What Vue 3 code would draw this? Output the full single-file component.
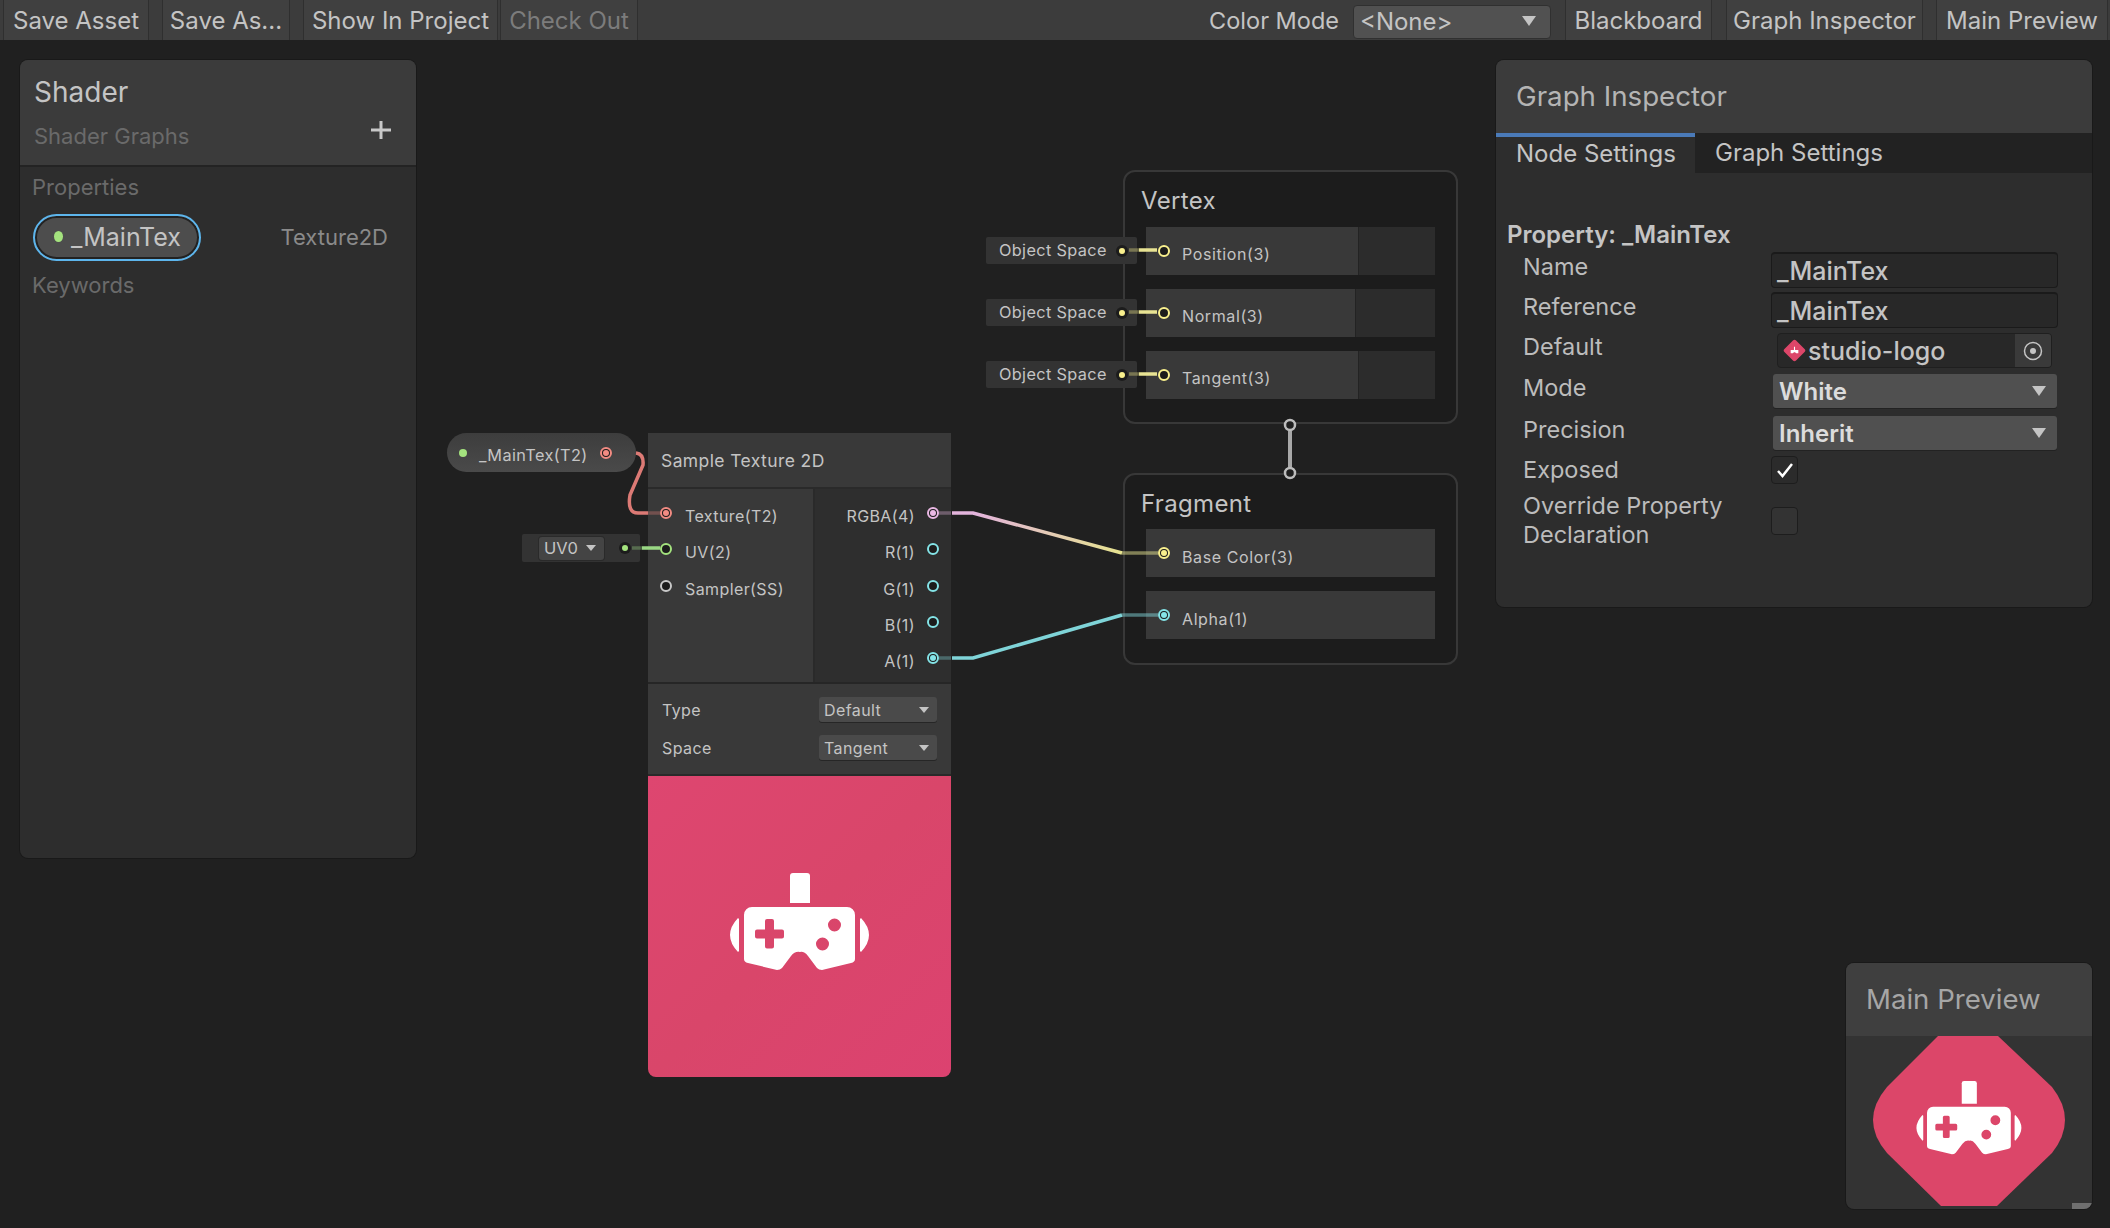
<template>
  <div class="app">
    <div class="toolbar">
      <button class="tool-btn save-asset">Save Asset</button>
      <button class="tool-btn save-as">Save As...</button>
      <button class="tool-btn show">Show In Project</button>
      <button class="tool-btn check">Check Out</button>
      <span class="tool-spacer"></span>
      <span class="color-label">Color Mode</span>
      <div class="color-select">&lt;None&gt;<i class="arrow"></i></div>
      <button class="tool-btn blackboard">Blackboard</button>
      <button class="tool-btn inspector-btn">Graph Inspector</button>
      <button class="tool-btn preview-btn">Main Preview</button>
    </div>

    <div class="graph">
      <!-- blackboard -->
      <section class="window shader-panel">
        <header class="shader-head">
          <div class="shader-title">Shader</div>
          <div class="shader-sub">
            <span>Shader Graphs</span>
            <svg class="plus" width="20" height="18" viewBox="0 0 20 18"><path d="M10 0v18M0 9h20" stroke="#c8c8c8" stroke-width="3" /></svg>
          </div>
        </header>
        <div class="shader-body">
          <div class="section-label">Properties</div>
          <div class="prop-row">
            <div class="prop-pill"><i class="green-dot"></i>_MainTex</div>
            <span class="prop-type">Texture2D</span>
          </div>
          <div class="section-label keywords">Keywords</div>
        </div>
      </section>

      <!-- property node -->
      <div class="prop-node">
        <i class="green-dot small"></i>
        <span>_MainTex(T2)</span>
        <i class="port on" :style="{ '--c': '#f28b82' }"></i>
      </div>

      <div class="uv-tag">
        <div class="uv-select">UV0<i class="arrow tiny"></i></div>
        <i class="tag-dot" :style="{ '--c': '#a4e37e' }"></i>
      </div>

      <!-- sample texture -->
      <div class="node">
        <div class="node-title">Sample Texture 2D</div>
        <div class="node-ports">
          <div class="ports-in">
            <div v-for="p in inputs" :key="p.name" class="port-row">
              <i class="port" :class="{ on: p.on }" :style="{ '--c': p.color }"></i>
              <span>{{ p.name }}</span>
            </div>
          </div>
          <div class="ports-out">
            <div v-for="p in outputs" :key="p.name" class="port-row out">
              <span>{{ p.name }}</span>
              <i class="port" :class="{ on: p.on }" :style="{ '--c': p.color }"></i>
            </div>
          </div>
        </div>
        <div class="node-settings">
          <div v-for="s in nodeSettings" :key="s.label" class="setting-row">
            <span>{{ s.label }}</span>
            <div class="node-select">{{ s.value }}<i class="arrow tiny"></i></div>
          </div>
        </div>
        <div class="node-preview">
          <svg width="303" height="301" viewBox="0 0 303 301"><use href="#headset" x="-8" y="-5" /></svg>
        </div>
      </div>

      <!-- master stack -->
      <div class="stack vertex">
        <div class="stack-title">Vertex</div>
        <div v-for="b in vertexBlocks" :key="b.name" class="block">
          <div class="block-main" :style="{ width: b.width + 'px' }">
            <i class="port" :style="{ '--c': '#f9f08d' }"></i>
            <span>{{ b.name }}</span>
          </div>
        </div>
      </div>
      <div class="stack fragment">
        <div class="stack-title">Fragment</div>
        <div v-for="b in fragmentBlocks" :key="b.name" class="block">
          <div class="block-main full">
            <i class="port on" :style="{ '--c': b.color }"></i>
            <span>{{ b.name }}</span>
          </div>
        </div>
      </div>
      <div v-for="t in tagTops" :key="t" class="space-tag" :style="{ top: t + 'px' }">
        <span>Object Space</span>
        <i class="tag-dot" :style="{ '--c': '#f9f08d' }"></i>
      </div>

      <!-- edges, in page coordinates -->
      <svg class="edges" width="2110" height="1188" viewBox="0 40 2110 1188">
        <defs>
          <linearGradient id="rgba-edge" x1="975" y1="513" x2="1122" y2="553" gradientUnits="userSpaceOnUse">
            <stop offset="0" stop-color="#e3b4dc" />
            <stop offset="1" stop-color="#e6e38f" />
          </linearGradient>
          <symbol id="headset" viewBox="0 0 303 303" width="303" height="303">
            <path fill="#fff" d="M150 105a3 3 0 0 1 3-3h14a3 3 0 0 1 3 3v27h-20z" />
            <path fill="#fff" fill-rule="evenodd" d="M112 136H207A8 8 0 0 1 215 144V188Q215 191 211 192L182 199Q179 199 177 197L168 185Q164 180 160 181Q155 180 151 185L142 197Q140 199 137 199L108 192Q104 191 104 188V144A8 8 0 0 1 112 136ZM127 148h5a2 2 0 0 1 2 2v8.500h8a2 2 0 0 1 2 2v5a2 2 0 0 1-2 2h-8v8a2 2 0 0 1-2 2h-5a2 2 0 0 1-2-2v-8h-8a2 2 0 0 1-2-2v-5a2 2 0 0 1 2-2h8v-8.500a2 2 0 0 1 2-2zM201 154a6.500 6.500 0 1 0-13 0a6.500 6.500 0 1 0 13 0zM189 173a6.500 6.500 0 1 0-13 0a6.500 6.500 0 1 0 13 0z" />
            <path fill="#fff" d="M98 147Q82 164 98 181l1-1v-32zM221 147Q237 164 221 181l-1-1v-32z" />
          </symbol>
        </defs>

        <path class="edge" stroke="#dc7a75" d="M636 453q8 1 7 12l-13 30q-3 18 8 18h10" />
        <path class="edge" stroke="#dc7a75" opacity=".35" d="M648 513h12" />
        <path class="edge" stroke="#9ad884" d="M642 548h18" />
        <path class="edge" stroke="#9ad884" opacity=".35" d="M632 548h10" />

        <path class="edge" stroke="#e3b4dc" opacity=".35" d="M939 513h12" />
        <path class="edge" stroke="url(#rgba-edge)" d="M952 513h21l149 40" />
        <path class="edge" stroke="#e6e38f" opacity=".5" d="M1122 553h36" />

        <path class="edge" stroke="#7fd4d8" opacity=".35" d="M939 658h12" />
        <path class="edge" stroke="#7fd4d8" d="M952 658h21l149 -43" />
        <path class="edge" stroke="#7fd4d8" opacity=".5" d="M1122 615h36" />

        <g v-for="y in [250, 312, 374]" :key="y">
          <path class="edge" stroke="#f9f08d" opacity=".35" d="M1129 0h10" :transform="`translate(0 ${y})`" />
          <path class="edge" stroke="#e8e393" d="M1139 0h18" :transform="`translate(0 ${y})`" />
        </g>

        <path d="M1290 431v36" stroke="#a8a8a8" stroke-width="4" />
        <circle cx="1290" cy="425" r="5" fill="#1f1f1f" stroke="#bdbdbd" stroke-width="2.500" />
        <circle cx="1290" cy="473" r="5" fill="#1f1f1f" stroke="#bdbdbd" stroke-width="2.500" />
      </svg>

      <!-- inspector -->
      <section class="window inspector">
        <header class="inspector-head">Graph Inspector</header>
        <div class="tabs">
          <div class="tab active">Node Settings</div>
          <div class="tab">Graph Settings</div>
        </div>
        <div class="inspector-body">
          <div class="prop-title">Property: _MainTex</div>
          <div class="fields">
            <span class="field-label">Name</span>
            <div class="text-input">_MainTex</div>
            <span class="field-label">Reference</span>
            <div class="text-input">_MainTex</div>
            <span class="field-label">Default</span>
            <div class="object-field">
              <svg class="logo" width="23" height="23" viewBox="0 0 21 21">
                <rect x="3" y="3" width="15" height="15" rx="2" transform="rotate(45 10.500 10.500)" fill="#dc4669" />
                <path d="M7 10h7v3h-2l-1-1h-1l-1 1H7zM10 7h1v3h-1z" fill="#fff" />
              </svg>
              <span class="object-name">studio-logo</span>
              <span class="object-pick">
                <svg width="20" height="20" viewBox="0 0 20 20">
                  <circle cx="10" cy="10" r="8.500" fill="none" stroke="#c4c4c4" stroke-width="1.500" />
                  <circle cx="10" cy="10" r="3" fill="#c4c4c4" />
                </svg>
              </span>
            </div>
            <span class="field-label">Mode</span>
            <div class="drop">White<i class="arrow"></i></div>
            <span class="field-label">Precision</span>
            <div class="drop">Inherit<i class="arrow"></i></div>
            <span class="field-label">Exposed</span>
            <div class="check-box">
              <svg width="18" height="16" viewBox="0 0 18 16"><path d="M2 9l4.500 5L16 2" fill="none" stroke="#fff" stroke-width="2.500" /></svg>
            </div>
            <span class="field-label wrap">Override Property Declaration</span>
            <div class="check-box lower"></div>
          </div>
        </div>
      </section>

      <!-- main preview -->
      <section class="window preview">
        <header class="preview-head">Main Preview</header>
        <div class="preview-body">
          <svg width="246" height="173" viewBox="0 0 246 173">
            <path fill="#dc4669" d="M92 0H152L206 51Q232 84 206 117L151 170H95L41 117Q13 84 41 51Z" />
            <use href="#headset" transform="translate(2.500 -32) scale(.755)" />
          </svg>
          <i class="resize"></i>
        </div>
      </section>
    </div>
  </div>
</template>

<script setup>
const inputs = [
  { name: 'Texture(T2)', color: '#f28b82', on: true },
  { name: 'UV(2)', color: '#a4e37e', on: false },
  { name: 'Sampler(SS)', color: '#c8c8c8', on: false }
]

const outputs = [
  { name: 'RGBA(4)', color: '#eab8e4', on: true },
  { name: 'R(1)', color: '#84e4e7', on: false },
  { name: 'G(1)', color: '#84e4e7', on: false },
  { name: 'B(1)', color: '#84e4e7', on: false },
  { name: 'A(1)', color: '#84e4e7', on: true }
]

const nodeSettings = [
  { label: 'Type', value: 'Default' },
  { label: 'Space', value: 'Tangent' }
]

const vertexBlocks = [
  { name: 'Position(3)', width: 213 },
  { name: 'Normal(3)', width: 210 },
  { name: 'Tangent(3)', width: 213 }
]

const fragmentBlocks = [
  { name: 'Base Color(3)', color: '#f9f08d' },
  { name: 'Alpha(1)', color: '#84e4e7' }
]

const tagTops = [197, 259, 321]
</script>

<style>
body {
  background: #202020;
}
</style>

<style scoped>
.app {
  width: 2110px;
  height: 1228px;
  overflow: hidden;
  background: #202020;
  color: #c4c4c4;
  font-family: Inter, "Noto Sans", sans-serif;
}

.toolbar {
  display: flex;
  align-items: stretch;
  height: 40px;
  background: #3c3c3c;
  font-size: 24px;
}

.tool-btn {
  padding: 1px 0 0;
  border: 0;
  border-right: 1px solid #2f2f2f;
  border-left: 1px solid #2f2f2f;
  background: #404040;
  color: #c4c4c4;
  font: inherit;
  white-space: nowrap;
}

.save-asset { width: 146px; margin-left: 3px; }
.save-as { width: 128px; margin-left: 13px; }
.show { width: 195px; margin-left: 13px; }
.check { width: 138px; margin-left: 2px; color: #7c7c7c; }
.blackboard { width: 147px; margin-left: 14px; }
.inspector-btn { width: 197px; margin-left: 14px; }
.preview-btn { width: 172px; margin-left: 13px; margin-right: 2px; }

.tool-spacer {
  flex: 1;
}

.color-label {
  align-self: center;
  margin-top: 1px;
  margin-right: 14px;
  font-size: 23.500px;
  white-space: nowrap;
}

.color-select {
  display: flex;
  align-items: center;
  justify-content: space-between;
  align-self: center;
  box-sizing: border-box;
  width: 198px;
  height: 34px;
  margin-top: 4px;
  padding: 0 14px 2px 6px;
  border: 1px solid #303030;
  border-radius: 4px;
  background: #515151;
}

.arrow {
  width: 0;
  height: 0;
  border-left: 7px solid transparent;
  border-right: 7px solid transparent;
  border-top: 10px solid #c4c4c4;
}

.arrow.tiny {
  border-left-width: 5.500px;
  border-right-width: 5.500px;
  border-top-width: 6px;
}

.graph {
  position: relative;
  height: 1188px;
}

.window {
  position: absolute;
  box-sizing: border-box;
  overflow: hidden;
  border-radius: 8px;
  box-shadow: 0 0 0 1px #191919;
  background: #2d2d2d;
}

/* shader panel */
.shader-panel {
  left: 20px;
  top: 20px;
  width: 396px;
  height: 798px;
}

.shader-head {
  box-sizing: border-box;
  height: 107px;
  padding: 12px 14px 0;
  border-bottom: 2px solid #232323;
  background: #3b3b3b;
}

.shader-title {
  height: 40px;
  font-size: 28px;
  line-height: 40px;
}

.shader-sub {
  display: flex;
  align-items: center;
  justify-content: space-between;
  height: 32px;
  margin-top: 8px;
  padding-right: 11px;
  color: #6a6a6a;
  font-size: 22px;
}

.plus {
  display: block;
  transform: translateY(-6px);
}

.shader-body {
  padding: 5px 12px;
}

.section-label {
  color: #6a6a6a;
  font-size: 22px;
  line-height: 30px;
}

.prop-row {
  display: flex;
  align-items: center;
  justify-content: space-between;
  height: 48px;
  margin-top: 11px;
  padding-right: 16px;
}

.prop-pill {
  display: flex;
  align-items: center;
  box-sizing: border-box;
  width: 168px;
  height: 47px;
  margin-left: 1px;
  padding-left: 19px;
  padding-bottom: 1px;
  border: 2px solid #5db5ec;
  border-radius: 24px;
  box-shadow: inset 0 0 0 2px #222;
  background: #4d4d4d;
  font-size: 25px;
}

.green-dot {
  flex: none;
  width: 9px;
  height: 11px;
  margin-right: 8px;
  border-radius: 50%;
  background: #a4e37e;
}

.green-dot.small {
  width: 8px;
  height: 8px;
  margin-right: 0;
}

.prop-type {
  color: #8a8a8a;
  font-size: 22px;
}

.keywords {
  margin-top: 9px;
}

/* small property node */
.prop-node {
  position: absolute;
  left: 447px;
  top: 393px;
  display: flex;
  align-items: center;
  box-sizing: border-box;
  width: 189px;
  height: 39px;
  padding-left: 12px;
  border-radius: 20px;
  background: linear-gradient(#3d3d3d, #4a4a4a);
  font-size: 16.300px;
  letter-spacing: .4px;
}

.prop-node span {
  margin: 5px 12px 0 12px;
  white-space: nowrap;
}

.port {
  position: relative;
  flex: none;
  box-sizing: border-box;
  width: 12px;
  height: 12px;
  border: 2px solid var(--c);
  border-radius: 50%;
  background: #1c1c1c;
}

.port.on::after {
  content: "";
  position: absolute;
  inset: 1px;
  border-radius: 50%;
  background: var(--c);
}

.uv-tag,
.space-tag {
  position: absolute;
  display: flex;
  align-items: center;
  box-sizing: border-box;
  border-radius: 2px;
  background: #333;
}

.uv-tag {
  left: 522px;
  top: 494px;
  width: 118px;
  height: 28px;
  font-size: 16.500px;
}

.uv-select {
  display: flex;
  align-items: center;
  justify-content: space-between;
  box-sizing: border-box;
  width: 65px;
  height: 23px;
  margin-left: 17px;
  padding: 0 8px 0 5px;
  border-radius: 3px;
  box-shadow: 0 0 0 1px #2a2a2a;
  background: #444;
}

.tag-dot {
  position: relative;
  box-sizing: border-box;
  width: 12px;
  height: 12px;
  margin-left: 15px;
  border-radius: 50%;
  background: #1c1c1c;
}

.tag-dot::after {
  content: "";
  position: absolute;
  inset: 3px;
  border-radius: 50%;
  background: var(--c);
}

.space-tag {
  left: 986px;
  width: 151px;
  height: 27px;
  padding-left: 13px;
  padding-bottom: 1px;
  font-size: 16.300px;
  letter-spacing: .35px;
}

.space-tag .tag-dot {
  margin-top: 1px;
  margin-left: 9px;
}

/* sample texture node */
.node {
  position: absolute;
  left: 648px;
  top: 393px;
  width: 303px;
  font-size: 16px;
  letter-spacing: .4px;
}

.node-title {
  box-sizing: border-box;
  height: 54px;
  padding: 0 13px;
  background: #393939;
  font-size: 17.500px;
  line-height: 56px;
}

.node-ports {
  display: flex;
  height: 193px;
  border-top: 2px solid #2a2a2a;
  border-bottom: 2px solid #262626;
  box-sizing: content-box;
}

.ports-in {
  box-sizing: border-box;
  width: 167px;
  padding: 6px 0 0 12px;
  border-right: 2px solid #2a2a2a;
  background: #393939;
}

.ports-out {
  flex: 1;
  padding: 6px 12px 0 0;
  background: #2e2e2e;
}

.port-row {
  display: flex;
  align-items: center;
  gap: 13px;
  height: 36.300px;
}

.port-row span {
  padding-top: 6px;
  white-space: nowrap;
}

.port-row.out {
  gap: 12px;
  justify-content: flex-end;
}

.node-settings {
  box-sizing: border-box;
  height: 90px;
  padding: 13px 14px 0;
  background: #393939;
}

.setting-row {
  display: flex;
  align-items: center;
  justify-content: space-between;
  height: 25px;
  margin-bottom: 13px;
}

.node-select {
  display: flex;
  align-items: center;
  justify-content: space-between;
  box-sizing: border-box;
  width: 118px;
  height: 25px;
  padding: 0 8px 0 5px;
  border-radius: 3px;
  box-shadow: 0 1px 0 #262626;
  background: #4a4a4a;
}

.node-preview {
  overflow: hidden;
  box-sizing: border-box;
  height: 303px;
  border-top: 2px solid #2a2a2a;
  border-radius: 0 0 8px 8px;
  background: linear-gradient(135deg, #de4670 0%, #d9466a 50%, #dc4270 100%);
}

.node-preview svg {
  display: block;
}

/* master stack */
.stack {
  position: absolute;
  left: 1123px;
  box-sizing: border-box;
  width: 335px;
  padding: 0 21px;
  border: 2px solid #383838;
  border-radius: 12px;
  background: #1c1c1c;
}

.vertex {
  top: 130px;
  height: 254px;
}

.fragment {
  top: 433px;
  height: 192px;
}

.stack-title {
  height: 55px;
  margin-left: -5px;
  font-size: 24px;
  letter-spacing: .35px;
  line-height: 57px;
}

.fragment .stack-title {
  height: 54px;
  line-height: 57px;
}

.block {
  height: 48px;
  margin-bottom: 14px;
  background: #2c2c2c;
}

.block-main {
  display: flex;
  align-items: center;
  gap: 12px;
  box-sizing: border-box;
  height: 48px;
  padding-left: 12px;
  border-right: 1px solid #232323;
  background: #393939;
  font-size: 16px;
  letter-spacing: .6px;
}

.block-main.full {
  width: 100%;
  border-right: 0;
}

.block-main span {
  padding-top: 6px;
}

.fragment .block-main span {
  padding-top: 8px;
}

.edges {
  position: absolute;
  left: 0;
  top: 0;
  pointer-events: none;
}

.edge {
  fill: none;
  stroke-width: 3.500;
}

/* inspector */
.inspector {
  left: 1496px;
  top: 20px;
  width: 596px;
  height: 547px;
}

.inspector-head {
  box-sizing: border-box;
  height: 73px;
  padding-left: 20px;
  background: #3b3b3b;
  color: #b4b4b4;
  font-size: 27.700px;
  line-height: 72px;
}

.tabs {
  display: flex;
  height: 40px;
  background: #222;
  font-size: 24px;
  line-height: 40px;
  white-space: nowrap;
}

.tab {
  padding: 0 21px 0 20px;
}

.tab.active {
  box-sizing: border-box;
  width: 199px;
  padding-right: 0;
  border-top: 4px solid #4a7ab8;
  background: #2d2d2d;
  line-height: 34px;
}

.inspector-body {
  padding: 45px 11px 0;
}

.prop-title {
  height: 34px;
  color: #c4c4c4;
  font-size: 24px;
  font-weight: 600;
  line-height: 33px;
}

.fields {
  display: grid;
  grid-template-columns: 248px 1fr;
  grid-template-rows: 40px 41px 41px 42px 40px 35px 57px;
  padding-left: 16px;
  font-size: 23.500px;
}

.field-label {
  line-height: 29px;
  color: #bcbcbc;
  transform: translateY(-1px);
}

.field-label:first-child,
.field-label:nth-child(3) {
  transform: none;
}

.field-label.wrap {
  width: 230px;
  transform: none;
}

.text-input {
  box-sizing: border-box;
  width: 287px;
  height: 36px;
  padding-left: 5px;
  border: 1px solid #1a1a1a;
  border-top-width: 2px;
  border-radius: 4px;
  background: #282828;
  font-size: 25px;
  font-weight: 500;
  line-height: 34px;
}

.object-field {
  display: flex;
  align-items: center;
  box-sizing: border-box;
  width: 275px;
  height: 35px;
  margin-left: 6px;
  padding-left: 5px;
  overflow: hidden;
  border: 1px solid #1f1f1f;
  border-radius: 4px;
  background: #282828;
  font-size: 25px;
  font-weight: 500;
}

.object-name {
  margin-left: 2px;
}

.object-pick {
  display: flex;
  align-items: center;
  justify-content: center;
  width: 36px;
  height: 100%;
  margin-left: auto;
  background: #3a3a3a;
}

.drop {
  display: flex;
  align-items: center;
  justify-content: space-between;
  box-sizing: border-box;
  width: 284px;
  height: 34px;
  margin-left: 2px;
  padding: 0 11px 0 6px;
  border-radius: 3px;
  box-shadow: 0 1px 0 #222;
  background: #505050;
  color: #dcdcdc;
  font-size: 24px;
  font-weight: 600;
}

.check-box {
  display: flex;
  align-items: center;
  justify-content: center;
  box-sizing: border-box;
  width: 27px;
  height: 28px;
  border: 1px solid #1d1d1d;
  border-radius: 4px;
  background: #2b2b2b;
}

.check-box.lower {
  margin-top: 16px;
  background: #333;
}

/* preview */
.preview {
  left: 1846px;
  top: 923px;
  width: 246px;
  height: 246px;
  background: #333;
}

.preview-head {
  box-sizing: border-box;
  height: 73px;
  padding-left: 20px;
  background: #3f3f3f;
  color: #a6a6a6;
  font-size: 27.600px;
  line-height: 72px;
}

.preview-body {
  position: relative;
  height: 173px;
}

.preview-body svg {
  display: block;
}

.resize {
  position: absolute;
  right: 0;
  bottom: 0;
  width: 20px;
  height: 6px;
  background: #6f6f6f;
}
</style>
